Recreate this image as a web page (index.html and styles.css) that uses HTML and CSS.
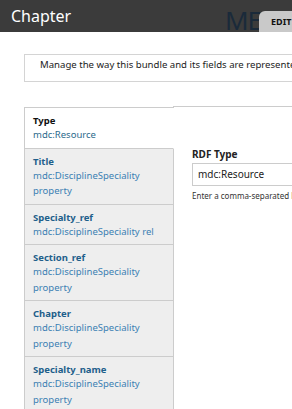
FILE: index.html
```html
<!DOCTYPE html>
<html lang="en">
<head>
<meta charset="utf-8">
<title>Chapter</title>
<link rel="stylesheet" href="styles.css">
</head>
<body>
<header class="page-head">
  <h1 class="page-title">Chapter</h1>
  <div class="head-right">
    <span class="brand">ME</span>
    <span class="edit-tab">EDIT</span>
  </div>
</header>
<main class="content">
  <div class="desc">Manage the way this bundle and its fields are represented in RDF.</div>
  <div class="vtabs">
    <ul class="vtabs-menu">
      <li class="vtab is-selected"><strong class="vtab-title">Type</strong><span class="vtab-sum">mdc:Resource</span></li>
      <li class="vtab"><strong class="vtab-title">Title</strong><span class="vtab-sum">mdc:DisciplineSpeciality property</span></li>
      <li class="vtab"><strong class="vtab-title">Specialty_ref</strong><span class="vtab-sum">mdc:DisciplineSpeciality rel</span></li>
      <li class="vtab"><strong class="vtab-title">Section_ref</strong><span class="vtab-sum">mdc:DisciplineSpeciality property</span></li>
      <li class="vtab"><strong class="vtab-title">Chapter</strong><span class="vtab-sum">mdc:DisciplineSpeciality property</span></li>
      <li class="vtab"><strong class="vtab-title">Specialty_name</strong><span class="vtab-sum">mdc:DisciplineSpeciality property</span></li>
    </ul>
    <div class="vtabs-pane">
      <label class="field-label">RDF Type</label>
      <div class="field-input">mdc:Resource</div>
      <div class="field-help">Enter a comma-separated list of types.</div>
    </div>
  </div>
</main>
</body>
</html>
```
FILE: styles.css
```css
html, body {
  margin: 0;
  padding: 0;
  overflow: hidden;
  background: #fff;
}
body {
  font-family: "Noto Sans", "Open Sans", sans-serif;
  color: #222;
  width: 292px;
}
.page-head {
  height: 32px;
  background: #3b3b3b;
  display: flex;
  justify-content: space-between;
  overflow: hidden;
}
.page-title {
  margin: 0;
  padding-left: 11px;
  font-size: 16px;
  font-weight: 400;
  line-height: 32px;
  color: #fff;
}
.head-right {
  display: flex;
  align-items: flex-start;
  flex-shrink: 0;
}
.brand {
  margin-top: 7px;
  font-size: 26px;
  line-height: 26px;
  letter-spacing: -1px;
  color: #1a2a3a;
}
.edit-tab {
  margin-top: 11px;
  margin-left: -2px;
  width: 33px;
  height: 22px;
  box-sizing: border-box;
  padding: 5px 0 0 12px;
  background: #c9c9c9;
  border-radius: 6px 0 0 0;
  font-size: 9px;
  font-weight: 700;
  color: #111;
  line-height: 12px;
  overflow: hidden;
  white-space: nowrap;
  position: relative;
}
.content {
  padding: 22px 0 0 24px;
  width: 340px;
}
.desc {
  border: 1px solid #d4d4d4;
  padding: 2px 15px 9px;
  font-size: 9.6px;
  line-height: 15px;
  color: #222;
  white-space: nowrap;
  overflow: hidden;
}
.vtabs {
  margin-top: 24px;
  display: flex;
  align-items: stretch;
}
.vtabs-menu {
  list-style: none;
  margin: 1px 0 0;
  padding: 0;
  width: 150px;
  flex-shrink: 0;
  border-top: 1px solid #ccc;
}
.vtab {
  display: flex;
  flex-direction: column;
  padding: 6px 8px 5px 8px;
  background: #eee;
  border-left: 1px solid #ccc;
  border-right: 1px solid #ccc;
  border-bottom: 1px solid #ccc;
  font-size: 9.5px;
}
.vtab.is-selected {
  background: #fff;
  border-right-color: #fff;
}
.vtab-title {
  color: #1f5f8b;
  font-weight: 700;
  line-height: 13px;
}
.is-selected .vtab-title {
  color: #111;
}
.vtab-sum {
  color: #3b7fb3;
  line-height: 15.5px;
}
.is-selected .vtab-sum {
  color: #2c6a8c;
}
.vtabs-pane {
  flex: 1;
  margin-left: -1px;
  border-top: 1px solid #ccc;
  padding: 40px 0 0 19px;
}
.field-label {
  display: block;
  font-size: 10px;
  font-weight: 700;
  line-height: 14px;
  color: #222;
}
.field-input {
  margin-top: 2px;
  height: 23px;
  box-sizing: border-box;
  border: 1px solid #ccc;
  padding: 0 5px;
  font-size: 10px;
  line-height: 21px;
  color: #222;
}
.field-help {
  margin-top: 4px;
  font-size: 8px;
  line-height: 11px;
  color: #333;
  white-space: nowrap;
}
```
